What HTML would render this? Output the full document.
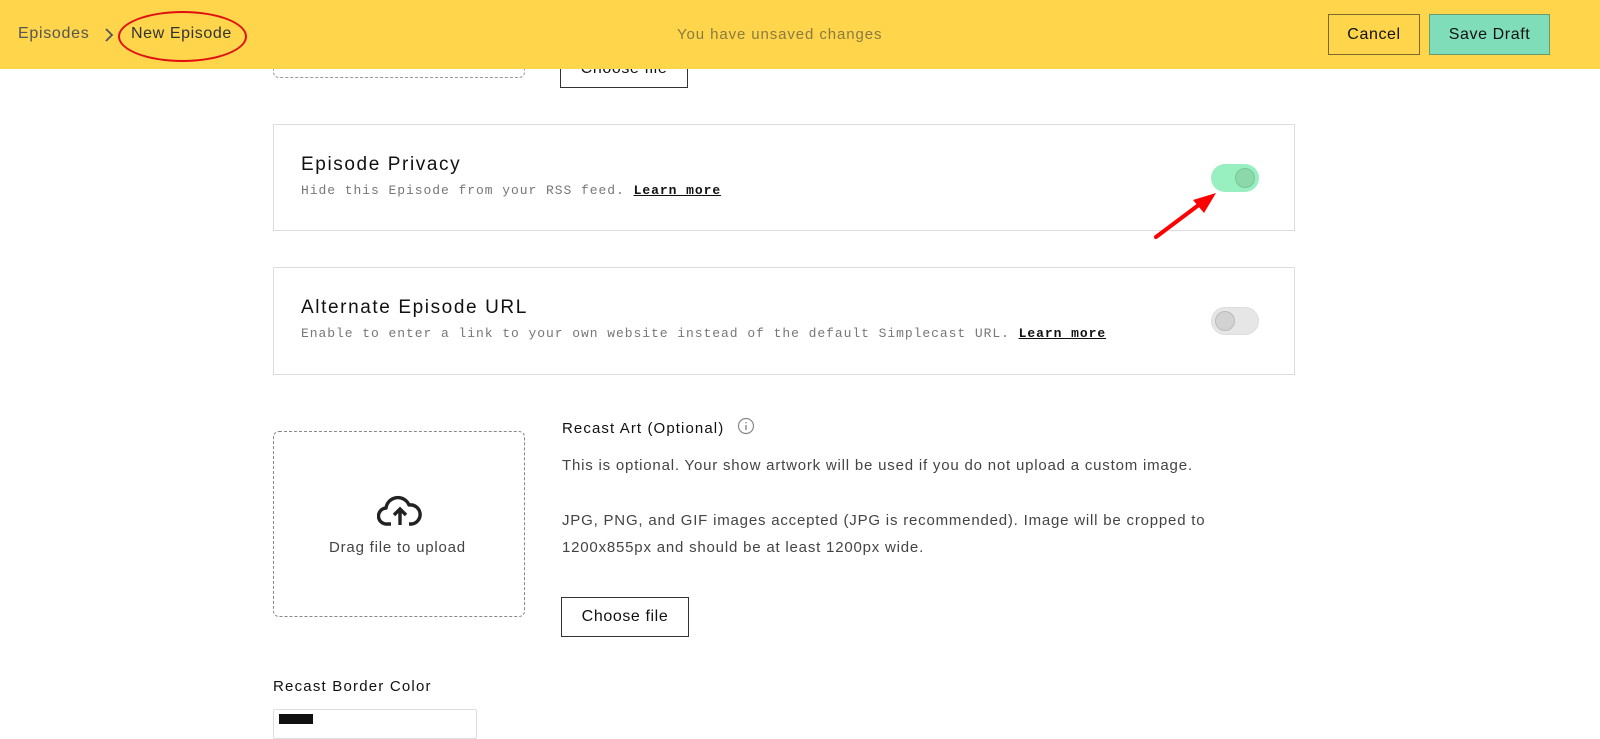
<!DOCTYPE html>
<html><head><meta charset="utf-8"><style>
*{box-sizing:border-box;margin:0;padding:0}
body{width:1600px;height:732px;overflow:hidden;background:#fff;font-family:"Liberation Sans",sans-serif;color:#222;position:relative}
.abs{position:absolute}
.hdr{left:0;top:0;width:1600px;height:69px;background:#fed54b}
.mono{font-family:"Liberation Mono",monospace;font-size:13px;letter-spacing:0.95px;color:#777}
.mono b{color:#111;text-decoration:underline;font-weight:bold}
.card{left:273px;width:1022px;border:1px solid #ddd;background:#fff}
.tog{width:48px;height:28px;border-radius:14px}
.knob{position:absolute;top:4px;width:20px;height:20px;border-radius:50%}
.btn{border:1px solid #333;background:#fff;font-size:16px;color:#111;display:flex;align-items:center;justify-content:center;letter-spacing:0.6px}
.p{font-size:15px;color:#444;letter-spacing:0.8px}
.t{font-size:19px;color:#111;letter-spacing:1.6px}
</style></head><body>
<div class="abs" style="left:273px;top:40px;width:252px;height:38px;border:1px dashed #999;border-top:none;border-radius:0 0 6px 6px"></div>
<div class="abs btn" style="left:560px;top:50px;width:128px;height:38px;border-top:none">Choose file</div>
<div class="abs hdr"></div>
<div class="abs" style="left:18px;top:25px;font-size:16px;color:#555;letter-spacing:0.7px">Episodes</div>
<svg class="abs" style="left:103px;top:27px" width="12" height="16"><path d="M3 2l6 6-6 6" stroke="#555" stroke-width="1.8" fill="none"/></svg>
<div class="abs" style="left:131px;top:25px;font-size:16px;color:#333;letter-spacing:0.6px">New Episode</div>
<div class="abs" style="left:118px;top:11px;width:129px;height:51px;border:2px solid #e01010;border-radius:50%"></div>
<div class="abs" style="left:677px;top:26px;font-size:15px;color:#8a7a40;letter-spacing:0.9px">You have unsaved changes</div>
<div class="abs btn" style="left:1328px;top:14px;width:92px;height:41px;background:transparent;border-color:#7a6a30">Cancel</div>
<div class="abs btn" style="left:1429px;top:14px;width:121px;height:41px;background:#7fdeb9;border-color:#6a9a70">Save Draft</div>

<div class="abs card" style="top:124px;height:107px"></div>
<div class="abs t" style="left:301px;top:154px">Episode Privacy</div>
<div class="abs mono" style="left:301px;top:183px">Hide this Episode from your RSS feed. <b>Learn more</b></div>
<div class="abs tog" style="left:1211px;top:164px;background:#98f0c0"><div class="knob" style="left:24px;background:#8bd8a8;border:1px solid #7cc49a"></div></div>
<svg class="abs" style="left:1150px;top:190px" width="70" height="55"><path d="M6 47L50 14" stroke="#f00" stroke-width="4" stroke-linecap="round"/><path d="M66 3L43 10L54 23Z" fill="#f00"/></svg>

<div class="abs card" style="top:267px;height:108px"></div>
<div class="abs t" style="left:301px;top:297px">Alternate Episode URL</div>
<div class="abs mono" style="left:301px;top:326px">Enable to enter a link to your own website instead of the default Simplecast URL. <b>Learn more</b></div>
<div class="abs tog" style="left:1211px;top:307px;background:#e6e6e6;border:1px solid #ddd"><div class="knob" style="left:3px;top:3px;background:#d2d2d2;border:1px solid #bbb"></div></div>

<div class="abs" style="left:273px;top:431px;width:252px;height:186px;border:1px dashed #888;border-radius:6px"></div>
<svg class="abs" style="left:377px;top:494px" width="46" height="34" viewBox="0 0 46 34"><path d="M14 30H10a8 8 0 0 1-1-16 12 12 0 0 1 23-3 9 9 0 0 1 3 19h-3" stroke="#222" stroke-width="3.4" fill="none" stroke-linejoin="round"/><path d="M23 31V16M17 21l6-6 6 6" stroke="#222" stroke-width="3.4" fill="none"/></svg>
<div class="abs p" style="left:329px;top:539px">Drag file to upload</div>

<div class="abs" style="left:562px;top:420px;font-size:15px;color:#111;letter-spacing:1.1px">Recast Art (Optional)</div>
<svg class="abs" style="left:737px;top:417px" width="18" height="18"><circle cx="9" cy="9" r="7.5" stroke="#888" stroke-width="1.2" fill="none"/><path d="M9 8v5M9 5v1.2" stroke="#888" stroke-width="1.4"/></svg>
<div class="abs p" style="left:562px;top:457px">This is optional. Your show artwork will be used if you do not upload a custom image.</div>
<div class="abs p" style="left:562px;top:512px">JPG, PNG, and GIF images accepted (JPG is recommended). Image will be cropped to</div>
<div class="abs p" style="left:562px;top:539px">1200x855px and should be at least 1200px wide.</div>
<div class="abs btn" style="left:561px;top:597px;width:128px;height:40px">Choose file</div>

<div class="abs" style="left:273px;top:678px;font-size:15px;color:#111;letter-spacing:1.2px">Recast Border Color</div>
<div class="abs" style="left:273px;top:709px;width:204px;height:30px;border:1px solid #ddd;border-radius:2px"></div>
<div class="abs" style="left:279px;top:714px;width:34px;height:10px;background:#111"></div>
</body></html>
